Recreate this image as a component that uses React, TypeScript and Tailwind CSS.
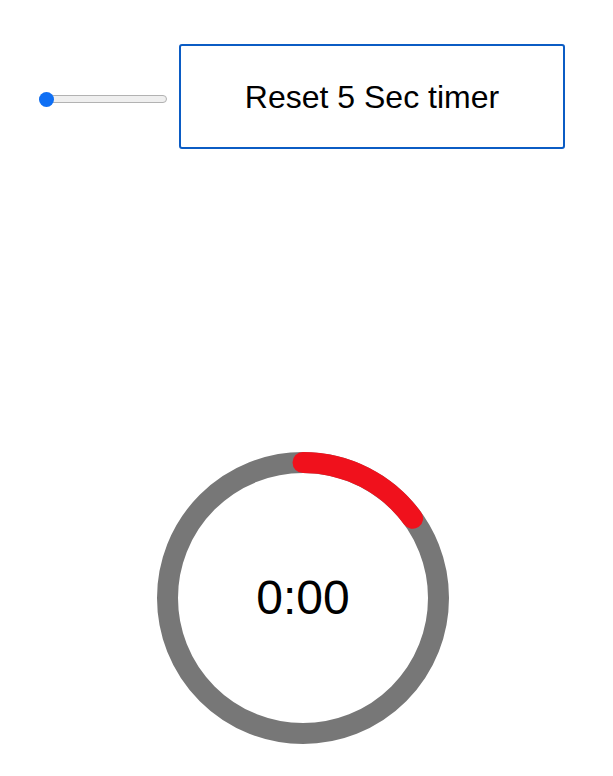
import React from "react";

export default function App() {
  const r = 135.5;
  const cx = 146;
  const cy = 146;
  const ang = (54 * Math.PI) / 180;
  const ex = cx + r * Math.sin(ang);
  const ey = cy - r * Math.cos(ang);
  return (
    <div className="w-[613px] h-[776px] bg-white" style={{ fontFamily: '"Liberation Sans", Arial, sans-serif' }}>
      <div className="flex items-center pt-[44px] pl-[39px]">
        <div className="relative w-[128px] h-[15px] flex items-center mt-[5px]">
          <div className="w-full h-[8px] rounded-full bg-[#efefef] border border-[#b2b2b2]" />
          <div className="absolute left-0 top-0 w-[15px] h-[15px] rounded-full bg-[#0f6ff4]" />
        </div>
        <button className="ml-[12px] w-[386px] h-[105px] border-2 border-[#0b5cc4] rounded-[3px] bg-white text-black text-[32px] flex items-center justify-center">
          Reset 5 Sec timer
        </button>
      </div>
      <div className="ml-[157px] mt-[303px] relative w-[292px] h-[292px]">
        <svg width="292" height="292" viewBox="0 0 292 292" className="block">
          <circle cx={cx} cy={cy} r={r} fill="none" stroke="#777777" strokeWidth="21" />
          <path
            d={`M ${cx} ${cy - r} A ${r} ${r} 0 0 1 ${ex} ${ey}`}
            fill="none"
            stroke="#f0111c"
            strokeWidth="21"
            strokeLinecap="round"
          />
        </svg>
        <div className="absolute inset-0 flex items-center justify-center text-[48px] text-black leading-none">
          0:00
        </div>
      </div>
    </div>
  );
}
